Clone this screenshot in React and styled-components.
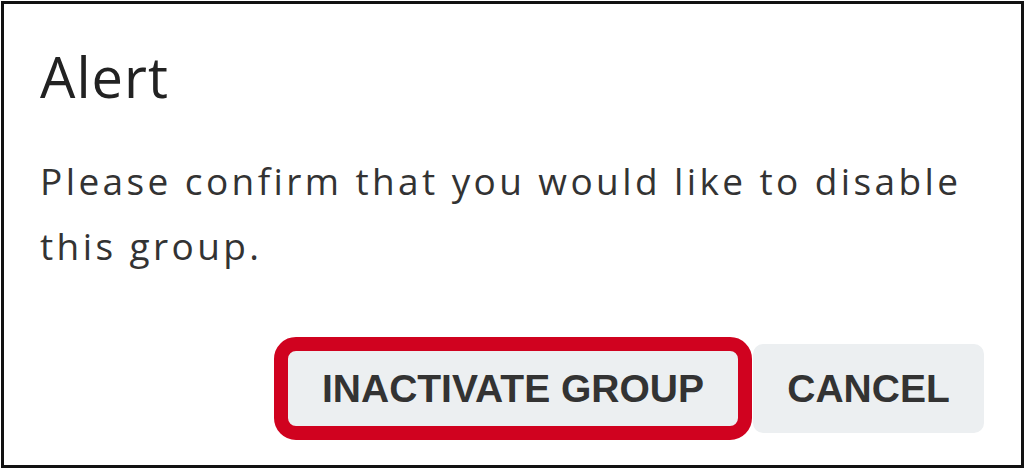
import React from "react";
import styled, { createGlobalStyle } from "styled-components";

const Global = createGlobalStyle`
  html, body { margin: 0; padding: 0; background: #ffffff; }
  body { font-family: "Open Sans", "Liberation Sans", sans-serif; }
`;

const Frame = styled.div`
  box-sizing: border-box;
  margin: 1px 0 0 1px;
  width: 1023px;
  height: 467px;
  border: 3px solid #111111;
  background: #ffffff;
  padding: 0 37px 32px 36px;
  display: flex;
  flex-direction: column;
`;

const Title = styled.h2`
  margin: 36px 0 0 0;
  font-family: "Open Sans", sans-serif;
  font-weight: 400;
  font-size: 56px;
  letter-spacing: 1px;
  line-height: 72px;
  color: #222222;
`;

const Message = styled.p`
  margin: 36px 0 0 0;
  font-family: "Open Sans", sans-serif;
  font-size: 37px;
  letter-spacing: 3.4px;
  line-height: 65px;
  color: #333333;
`;

const Actions = styled.div`
  margin-top: auto;
  display: flex;
  justify-content: flex-end;
  gap: 8px;
`;

const Highlight = styled.div`
  position: relative;
  display: flex;
`;

const Ring = styled.span`
  position: absolute;
  inset: -7px;
  border: 14px solid #d0021f;
  border-radius: 22px;
  pointer-events: none;
`;

const Button = styled.button`
  box-sizing: border-box;
  height: 89px;
  width: ${(p) => p.$w}px;
  border: none;
  border-radius: 10px;
  background: #eceff1;
  color: #333333;
  font-family: "Liberation Sans", Arial, sans-serif;
  font-weight: 700;
  font-size: 39px;
  padding: 0;
  cursor: pointer;
`;

export default function App() {
  return (
    <>
      <Global />
      <Frame>
        <Title>Alert</Title>
        <Message>Please confirm that you would like to disable this group.</Message>
        <Actions>
          <Highlight>
            <Button $w={464}>INACTIVATE GROUP</Button>
            <Ring />
          </Highlight>
          <Button $w={231}>CANCEL</Button>
        </Actions>
      </Frame>
    </>
  );
}
